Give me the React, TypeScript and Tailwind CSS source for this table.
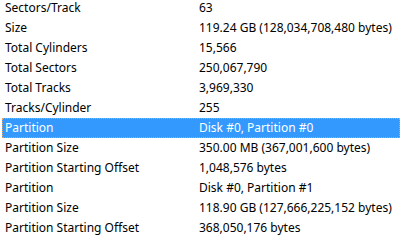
const rows: [string, string][] = [
  ["Sectors/Track", "63"],
  ["Size", "119.24 GB (128,034,708,480 bytes)"],
  ["Total Cylinders", "15,566"],
  ["Total Sectors", "250,067,790"],
  ["Total Tracks", "3,969,330"],
  ["Tracks/Cylinder", "255"],
  ["Partition", "Disk #0, Partition #0"],
  ["Partition Size", "350.00 MB (367,001,600 bytes)"],
  ["Partition Starting Offset", "1,048,576 bytes"],
  ["Partition", "Disk #0, Partition #1"],
  ["Partition Size", "118.90 GB (127,666,225,152 bytes)"],
  ["Partition Starting Offset", "368,050,176 bytes"],
];

export default function App() {
  return (
    <div className="w-[400px] h-[241px] overflow-hidden bg-white font-['Noto_Sans',sans-serif] text-[12px] text-black">
      <div className="-mt-[2px] pl-[2px]">
        {rows.map(([name, value], i) => {
          const selected = i === 6;
          return (
            <div
              key={i}
              className={
                selected
                  ? "flex h-[20px] items-center bg-[#3399ff] text-white border border-dotted border-[#e8a060]"
                  : "flex h-[20px] items-center border border-transparent"
              }
            >
              <div className="w-[196px] shrink-0 pl-[2px] whitespace-nowrap">{name}</div>
              <div className="whitespace-nowrap">{value}</div>
            </div>
          );
        })}
      </div>
    </div>
  );
}
